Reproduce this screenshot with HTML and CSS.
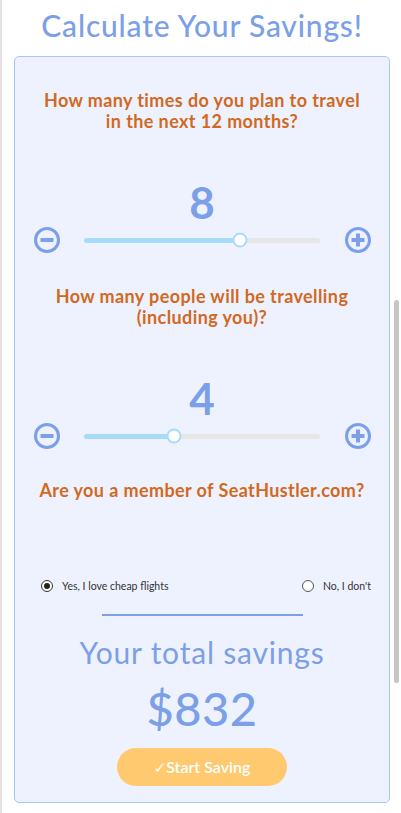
FILE: index.html
```html
<!DOCTYPE html>
<html>
<head>
<meta charset="utf-8">
<link rel="stylesheet" href="styles.css">
</head>
<body>
<div class="page">
  <h1 class="title">Calculate Your Savings!</h1>
  <div class="card">
    <p class="question q1">How many times do you plan to travel<br>in the next 12 months?</p>
    <div class="value v1">8</div>
    <div class="slider-row">
      <svg class="icon" viewBox="0 0 28 28"><circle cx="14" cy="14" r="11.5" fill="none" stroke="#7b9fe8" stroke-width="3"/><rect x="7.5" y="12" width="13" height="4" fill="#7b9fe8"/></svg>
      <div class="track"><div class="fill" style="width:66%"></div><div class="thumb" style="left:66%"></div></div>
      <svg class="icon" viewBox="0 0 28 28"><circle cx="14" cy="14" r="11.5" fill="none" stroke="#7b9fe8" stroke-width="3"/><rect x="7.5" y="12" width="13" height="4" fill="#7b9fe8"/><rect x="12" y="7.5" width="4" height="13" fill="#7b9fe8"/></svg>
    </div>
    <p class="question q2">How many people will be travelling<br>(including you)?</p>
    <div class="value v2">4</div>
    <div class="slider-row">
      <svg class="icon" viewBox="0 0 28 28"><circle cx="14" cy="14" r="11.5" fill="none" stroke="#7b9fe8" stroke-width="3"/><rect x="7.5" y="12" width="13" height="4" fill="#7b9fe8"/></svg>
      <div class="track"><div class="fill" style="width:38%"></div><div class="thumb" style="left:38%"></div></div>
      <svg class="icon" viewBox="0 0 28 28"><circle cx="14" cy="14" r="11.5" fill="none" stroke="#7b9fe8" stroke-width="3"/><rect x="7.5" y="12" width="13" height="4" fill="#7b9fe8"/><rect x="12" y="7.5" width="4" height="13" fill="#7b9fe8"/></svg>
    </div>
    <p class="question q3">Are you a member of SeatHustler.com?</p>
    <div class="radios">
      <label class="radio"><span class="dot checked"></span>Yes, I love cheap flights</label>
      <label class="radio"><span class="dot"></span>No, I don't</label>
    </div>
    <div class="divider"></div>
    <div class="total-label">Your total savings</div>
    <div class="total">$832</div>
    <div class="btn-wrap"><button class="btn"><span class="check">✓</span>Start Saving</button></div>
  </div>
</div>
<div class="scrollbar"></div>
</body>
</html>
```
FILE: styles.css
```css
html, body {
  margin: 0;
  padding: 0;
  background: #fff;
}
body {
  font-family: Lato, "Noto Sans", sans-serif;
  border-left: 2px solid #e2e2e2;
  min-height: 813px;
  box-sizing: border-box;
}
.page {
  padding: 0 11px 0 12px;
}
.title {
  margin: 0;
  padding-top: 5px;
  height: 56px;
  box-sizing: border-box;
  text-align: center;
  font-size: 30px;
  font-weight: 500;
  color: #7b9fe8;
  line-height: 40px;
  letter-spacing: 0.8px;
}
.card {
  background: #eef2fe;
  border: 1px solid #a8c4fb;
  border-radius: 5px;
  padding: 33px 0 0;
  height: 747px;
  box-sizing: border-box;
}
.question {
  margin: 0;
  text-align: center;
  color: #d2691e;
  font-weight: 700;
  font-size: 18px;
  line-height: 21px;
  letter-spacing: 0.4px;
}
.value {
  text-align: center;
  color: #7b9fe8;
  font-weight: 700;
  font-size: 44px;
  line-height: 44px;
  margin-top: 48px;
}
.slider-row {
  display: flex;
  align-items: center;
  padding: 0 17px 0 18px;
  margin-top: 2px;
  height: 28px;
}
.icon {
  width: 28px;
  height: 28px;
  flex: none;
}
.track {
  position: relative;
  flex: 1;
  height: 5px;
  margin: 0 24px 0 23px;
  background: #e6e6e6;
  border-radius: 3px;
}
.fill {
  height: 100%;
  background: #a6dcf8;
  border-radius: 3px;
}
.thumb {
  position: absolute;
  top: 50%;
  width: 11px;
  height: 11px;
  border: 2px solid #a6dcf8;
  background: #fff;
  border-radius: 50%;
  transform: translate(-50%, -50%);
}
.q2 { margin-top: 32px; }
.v2 { margin-top: 48px; }
.q3 { margin-top: 30px; }
.radios {
  display: flex;
  justify-content: space-between;
  align-items: center;
  height: 12px;
  margin-top: 79px;
  padding: 0 18px 0 26px;
}
.radio {
  display: flex;
  align-items: center;
  font-size: 10.5px;
  color: #333;
}
.dot {
  width: 12px;
  height: 12px;
  border: 1px solid #555;
  border-radius: 50%;
  background: #fff;
  box-sizing: border-box;
  margin-right: 9px;
  position: relative;
}
.dot.checked {
  border-color: #333;
}
.dot.checked::after {
  content: "";
  position: absolute;
  left: 2px;
  top: 2px;
  width: 6px;
  height: 6px;
  border-radius: 50%;
  background: #222;
}
.divider {
  width: 201px;
  height: 2px;
  background: #7b9fe8;
  margin: 22px auto 0;
}
.total-label {
  margin-top: 19px;
  text-align: center;
  color: #7b9fe8;
  font-size: 30px;
  line-height: 34px;
  letter-spacing: 0.8px;
}
.total {
  text-align: center;
  color: #7b9fe8;
  font-size: 47px;
  font-weight: 500;
  line-height: 56px;
  margin-top: 11px;
  letter-spacing: 0.5px;
}
.btn-wrap {
  display: flex;
  justify-content: center;
  margin-top: 12px;
}
.btn {
  width: 170px;
  height: 38px;
  border: none;
  border-radius: 19px;
  background: #ffc970;
  color: #fff;
  font-family: inherit;
  font-size: 16px;
  font-weight: 600;
  padding: 0;
}
.check {
  font-family: "DejaVu Sans", sans-serif;
  font-weight: 400;
  font-size: 15px;
}
.scrollbar {
  position: fixed;
  right: 2px;
  top: 300px;
  width: 5px;
  height: 383px;
  border-radius: 3px;
  background: #c6c6c6;
}
```
